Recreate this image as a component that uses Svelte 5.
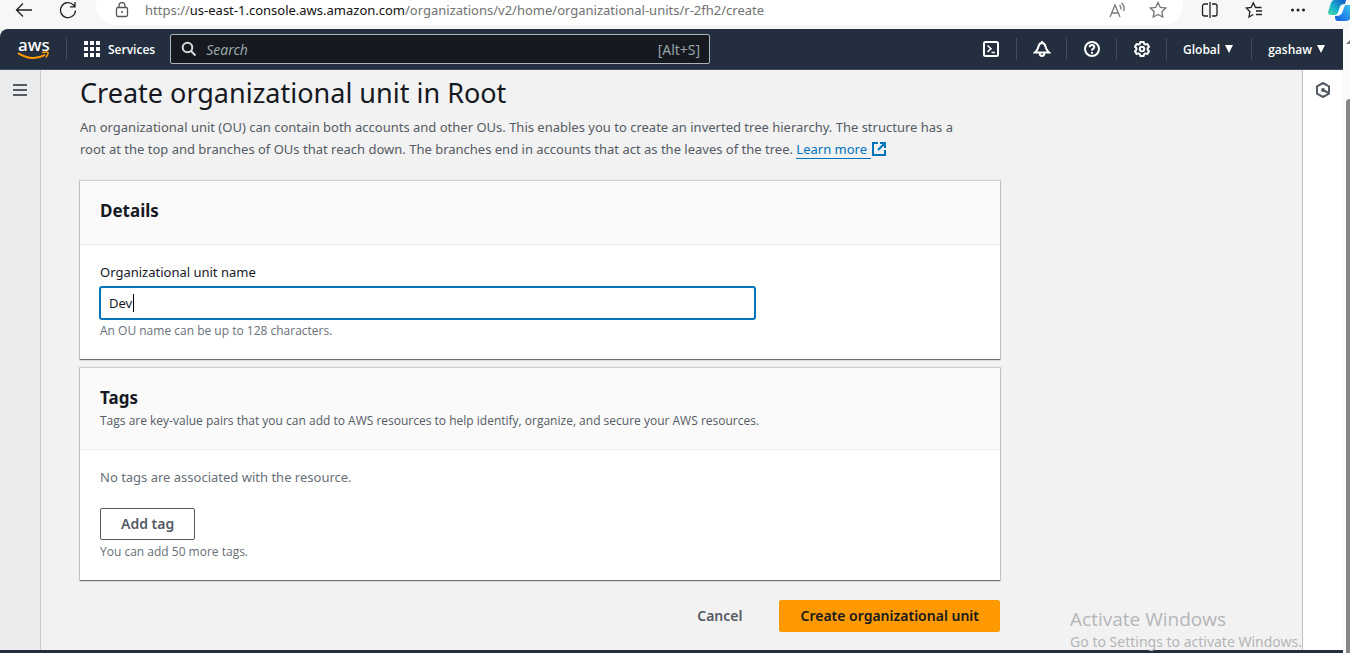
<script>
  let name = $state('Dev');
  let query = $state('');
</script>

<div class="window">
  <header class="browser">
    <button class="plain back" aria-label="Back">
      <svg width="18" height="16" viewBox="0 0 18 16"><path d="M17 8H1.5M8 1.500L1.500 8L8 14.500" /></svg>
    </button>
    <button class="plain reload" aria-label="Refresh">
      <svg width="18" height="18" viewBox="0 0 18 18"><path d="M16.500 9.500A7.500 7.500 0 1 1 14.500 4L16 5.500M16 1V5.800H11" /></svg>
    </button>
    <div class="address">
      <svg class="lock" width="14" height="16" viewBox="0 0 14 16"><rect x="1.500" y="5.500" width="11" height="9" rx="1.500" /><path d="M4 5.500V3.500a3 3 0 0 1 6 0V5.500" /><circle cx="7" cy="10" r="1" fill="#555" stroke="none" /></svg>
      <span class="url">https://<b>us-east-1.console.aws.amazon.com</b>/organizations/v2/home/organizational-units/r-2fh2/create</span>
      <button class="plain" aria-label="Read aloud">
        <svg class="grey" width="18" height="16" viewBox="0 0 18 16"><path d="M1 15L6 3L11 15M2.800 11H9.200M10.500 3Q12.500 5 11.800 7.500M12.500 1Q16.500 4.500 14.500 9" /></svg>
      </button>
      <button class="plain star" aria-label="Add to favorites">
        <svg class="grey" width="18" height="18" viewBox="0 0 18 18"><path d="M9 1.500L11.300 6.300L16.700 7L12.800 10.700L13.800 16L9 13.400L4.200 16L5.200 10.700L1.300 7L6.700 6.300Z" /></svg>
      </button>
    </div>
    <div class="tools">
      <button class="plain" aria-label="Split screen">
        <svg width="18" height="18" viewBox="0 0 18 18"><path d="M7 3H3.500A2 2 0 0 0 1.500 5V13A2 2 0 0 0 3.500 15H7M11 3H14A2 2 0 0 1 16 5V13A2 2 0 0 1 14 15H11M9 1V17" /></svg>
      </button>
      <button class="plain" aria-label="Favorites">
        <svg width="18" height="18" viewBox="0 0 18 18"><path d="M16.500 6.500H10.500L8.300 1.800L6.200 6.300L1.300 7L4.900 10.700L4 16L8.300 13.500M11 10H17M11 13.500H17" /></svg>
      </button>
      <button class="plain" aria-label="Settings and more">
        <svg width="18" height="18" viewBox="0 0 18 18"><g fill="#222" stroke="none"><circle cx="3.500" cy="9" r="1.500" /><circle cx="9" cy="9" r="1.500" /><circle cx="14.500" cy="9" r="1.500" /></g></svg>
      </button>
      <button class="plain copilot" aria-label="Copilot">
        <svg width="22" height="22" viewBox="0 0 22 22">
          <defs>
            <linearGradient id="cpa" x1="0" y1="1" x2="1" y2="0"><stop offset="0" stop-color="#4fdc9a" /><stop offset=".4" stop-color="#17b3cf" /><stop offset="1" stop-color="#1457c9" /></linearGradient>
            <linearGradient id="cpb" x1="0" y1="1" x2="1" y2="0"><stop offset="0" stop-color="#1660d8" /><stop offset=".5" stop-color="#2489ed" /><stop offset="1" stop-color="#38c8e8" /></linearGradient>
          </defs>
          <path d="M6 0H18L17 4Q13 4 12 7L10 13Q9 15 7 15H3Q0 15 0 12L3 3Q4 0 6 0Z" fill="url(#cpa)" stroke="none" />
          <path d="M17 5H22V19Q21 21 18 21H10Q7 21 7 17V16Q11 16 12 13Z" fill="url(#cpb)" stroke="none" />
          <path d="M12 7Q13 4 17 5L14 13Q12 17 7 15Q9.500 15 10 13Z" fill="#fff" stroke="none" />
        </svg>
      </button>
    </div>
  </header>

  <div class="viewport">
    <div class="page">
      <nav class="topnav">
        <a class="logo" href="#home" aria-label="AWS home">
          <span>aws</span>
          <svg width="34" height="10" viewBox="0 0 34 10"><path d="M1 2Q15 11 28 3.800" /><path d="M25 1.500Q30.500 .5 31 1.500Q31.500 3 29 6.500" stroke-width="1.500" /></svg>
        </a>
        <button class="services">
          <svg width="16" height="16" viewBox="0 0 16 16"><path d="M0 0h4v4H0zM6 0h4v4H6zM12 0h4v4h-4zM0 6h4v4H0zM6 6h4v4H6zM12 6h4v4h-4zM0 12h4v4H0zM6 12h4v4H6zM12 12h4v4h-4z" fill="#fff" stroke="none" /></svg>
          Services
        </button>
        <label class="search">
          <svg width="16" height="16" viewBox="0 0 16 16"><circle cx="6.500" cy="6.500" r="4.800" /><path d="M10 10L14.500 14.500" /></svg>
          <input type="search" placeholder="Search" aria-label="Search" bind:value={query} />
          <kbd>[Alt+S]</kbd>
        </label>
        <div class="actions">
          <button class="icon" aria-label="CloudShell">
            <svg width="16" height="16" viewBox="0 0 16 16"><rect x="1" y="1" width="14" height="14" rx="1.500" /><path d="M4.500 4.500L8 7.700L4.500 11M8.500 11.500H12" stroke-width="1.600" /></svg>
          </button>
          <button class="icon" aria-label="Notifications">
            <svg width="18" height="16" viewBox="0 0 18 16"><path d="M9 0V2M2 11.500H16C13.500 9.500 13 8 12.500 5.500C12 3 11 2 9 2S6 3 5.500 5.500C5 8 4.500 9.500 2 11.500Z" /><path d="M6.500 12Q7 15 9 15T11.500 12" /></svg>
          </button>
          <button class="icon" aria-label="Help">
            <svg width="16" height="16" viewBox="0 0 16 16"><circle cx="8" cy="8" r="7" /><path d="M5.700 6.200Q5.700 4 8 4T10.300 6Q10.300 7.200 9 7.900Q8 8.500 8 9.700M8 11V12.800" /></svg>
          </button>
          <button class="icon" aria-label="Settings">
            <svg width="16" height="16" viewBox="0 0 16 16"><path d="M6.300 1H9.700L10.200 2.900L11.500 3.600L13.400 3L15 5.800L13.600 7.200V8.800L15 10.200L13.400 13L11.500 12.400L10.200 13.100L9.700 15H6.300L5.800 13.100L4.500 12.400L2.600 13L1 10.200L2.400 8.800V7.200L1 5.800L2.600 3L4.500 3.600L5.800 2.900Z" stroke-linejoin="round" /><circle cx="8" cy="8" r="2.200" /></svg>
          </button>
          <button class="menu">Global <svg width="8" height="8" viewBox="0 0 8 8"><path d="M0 0H8L4 8Z" fill="#fff" stroke="none" /></svg></button>
          <button class="menu">gashaw <svg width="8" height="8" viewBox="0 0 8 8"><path d="M0 0H8L4 8Z" fill="#fff" stroke="none" /></svg></button>
        </div>
      </nav>

      <div class="body">
        <aside class="left">
          <button class="plain" aria-label="Open navigation">
            <svg width="14" height="12" viewBox="0 0 14 12"><path d="M0 1H14M0 6H14M0 11H14" stroke="#545b64" stroke-width="2" /></svg>
          </button>
        </aside>

        <main>
          <form class="column" onsubmit={(e) => e.preventDefault()}>
            <div class="intro">
              <h1>Create organizational unit in Root</h1>
              <p>
                An organizational unit (OU) can contain both accounts and other OUs. This enables you to create an inverted tree hierarchy. The structure has a
                root at the top and branches of OUs that reach down. The branches end in accounts that act as the leaves of the tree.
                <a href="#learn"><span>Learn more</span><svg width="16" height="16" viewBox="0 0 16 16"><path d="M7 2H2V14H14V9M9 2H14V7M14 2L7 9" /></svg></a>
              </p>
            </div>

            <section class="card">
              <div class="head"><h2>Details</h2></div>
              <div class="content">
                <label class="name" for="ou-name">Organizational unit name</label>
                <div class="field">
                  <input id="ou-name" type="text" bind:value={name} />
                  <i class="caret"></i>
                </div>
                <p class="hint">An OU name can be up to 128 characters.</p>
              </div>
            </section>

            <section class="card">
              <div class="head tags">
                <h2>Tags</h2>
                <p>Tags are key-value pairs that you can add to AWS resources to help identify, organize, and secure your AWS resources.</p>
              </div>
              <div class="content">
                <p class="empty">No tags are associated with the resource.</p>
                <button type="button" class="btn outline">Add tag</button>
                <p class="hint">You can add 50 more tags.</p>
              </div>
            </section>

            <div class="submit">
              <button type="button" class="btn link">Cancel</button>
              <button type="submit" class="btn primary">Create organizational unit</button>
            </div>
          </form>
        </main>

        <aside class="right">
          <button class="plain" aria-label="Open tools">
            <svg width="16" height="16" viewBox="0 0 16 16"><path d="M8 1L14 4.300V11.700L8 15L2 11.700V4.300Z" stroke="#545b64" stroke-width="2" stroke-linejoin="round" /><circle cx="8" cy="8" r="2" fill="#545b64" stroke="none" /><path d="M8 8L13.500 11" stroke="#545b64" stroke-width="2" /></svg>
          </button>
        </aside>
      </div>
      <footer></footer>
    </div>
    <div class="scroll"><span class="up"></span><span class="thumb"></span></div>
  </div>

  <div class="notice">
    <strong>Activate Windows</strong>
    <span>Go to Settings to activate Windows.</span>
  </div>
</div>

<style>
  :global(body) { margin: 0; background: #f2f2f2; }
  .window, .window :is(button, input) { font-family: "Noto Sans", "Open Sans", sans-serif; }
  .window { position: relative; min-height: 100vh; display: flex; flex-direction: column; color: #16191f; font-size: 13px; }
  * { box-sizing: border-box; }
  h1, h2, p { margin: 0; }
  svg { fill: none; stroke: #222; stroke-width: 1.3; flex: none; display: block; }
  svg.grey { stroke: #777; }
  button { cursor: pointer; }
  .plain { border: 0; padding: 0; background: none; display: flex; align-items: center; }

  .browser { height: 29px; display: flex; align-items: flex-start; background: #f7f7f7; overflow: hidden; }
  .browser .plain { height: 20px; }
  .back { margin-left: 15px; }
  .reload { margin-left: 26px; }
  .address { flex: 1; height: 25px; margin-left: 19px; padding: 0 16px 0 19px; display: flex; align-items: flex-start; background: #fff; border-radius: 0 0 20px 20px; }
  .lock { margin-top: 2px; stroke: #555; }
  .url { flex: 1; min-width: 0; margin-left: 16px; overflow: hidden; white-space: nowrap; font-size: 13px; line-height: 20px; color: #717171; }
  .url b { font-weight: 400; color: #111; }
  .star { margin-left: 22px; }
  .tools { display: flex; gap: 26px; margin-left: 18px; }
  .browser .copilot { margin-left: -5px; align-items: flex-start; }

  .viewport { flex: 1; display: flex; }
  .page { flex: 1; min-width: 0; display: flex; flex-direction: column; }
  .topnav { height: 41px; display: flex; align-items: center; background: #232f3e; border-top-left-radius: 8px; border-bottom: 1px solid #414d5c; color: #fff; }
  .topnav svg { stroke: #fff; stroke-width: 2; }
  .topnav button { border: 0; background: none; color: #fff; font-family: "Open Sans", "Noto Sans", sans-serif; font-size: 12px; font-weight: 600; display: flex; align-items: center; }
  .logo { width: 66px; padding: 0 0 2px 17px; color: #fff; text-decoration: none; font-size: 17px; font-weight: 500; line-height: 17px; }
  .logo span { display: block; padding-left: 1px; }
  .topnav .logo svg { stroke: #f90; margin-top: -2px; }
  .topnav .services { height: 22px; padding: 0 15px 0 17px; gap: 8px; border-left: 1px solid #414d5c; }
  .search { width: 540px; height: 30px; padding: 0 9px 0 10px; display: flex; align-items: center; gap: 9px; background: #16191f; border: 1px solid #aab7b8; border-radius: 2px; }
  .search svg { stroke: #d5dbdb; }
  .search input { flex: 1; min-width: 0; border: 0; padding: 0; outline: 0; background: none; color: #fff; font-size: 14px; }
  .search input::placeholder { color: #95a5a6; font-style: italic; opacity: 1; }
  kbd { font-family: inherit; font-size: 14px; color: #95a5a6; }
  .actions { margin-left: auto; display: flex; }
  .topnav .actions button { height: 22px; border-left: 1px solid #414d5c; }
  .topnav .actions button:first-child { border-left: 0; }
  .topnav .icon { width: 50px; padding: 0; justify-content: center; }
  .topnav .menu { padding: 0 18px 0 16px; gap: 5px; }

  .body { flex: 1; display: flex; }
  .left { width: 41px; background: #eaebed; border-right: 1px solid #c8cacc; padding: 14px 0 0 13px; }
  .right { width: 41px; background: #fff; border-left: 1px solid #c0c2c4; padding: 12px 0 0 12px; }
  main { flex: 1; min-width: 0; padding: 7px 39px 18px; background: #f2f2f2; }
  .column { max-width: 920px; display: flex; flex-direction: column; }
  .intro { margin-bottom: 21px; }
  h1 { font-size: 27px; line-height: 32px; font-weight: 400; }
  .intro p { margin-top: 7px; padding-right: 32px; line-height: 22px; color: #545b64; }
  .intro a { color: #0073bb; text-decoration: none; white-space: nowrap; }
  .intro a span { padding-right: 4px; border-bottom: 1px solid #0073bb; }
  .intro a svg { display: inline-block; vertical-align: -3px; stroke: #0073bb; stroke-width: 2; }

  .card { background: #fff; box-shadow: 0 1px 1px 0 #0007, 0 0 1px 1px #0002; }
  .card + .card { margin-top: 9px; }
  .head { padding: 17px 20px 21px; background: #fafafa; border-bottom: 1px solid #eaeded; }
  h2 { font-size: 17px; line-height: 25px; font-weight: 700; }
  .head.tags { padding-bottom: 18px; }
  .head p { margin-top: 1px; font-family: "Open Sans", "Noto Sans", sans-serif; font-size: 12px; line-height: 20px; color: #545b64; }
  .content { padding: 17px 20px 20px; }
  .name { display: block; line-height: 20px; margin-bottom: 5px; }
  .field { position: relative; width: calc(75% - 5px); }
  .field input { width: 100%; height: 32px; padding: 0 8px; border: 1px solid #0073bb; box-shadow: 0 0 0 1px #0073bb; border-radius: 2px; outline: 0; font-size: 13px; color: #16191f; display: block; }
  .caret { position: absolute; left: 33px; top: 7px; width: 1px; height: 18px; background: #000; }
  .hint { font-family: "Open Sans", "Noto Sans", sans-serif; font-size: 12px; line-height: 16px; margin-top: 4px; color: #687078; }
  .empty { line-height: 20px; color: #687078; margin-bottom: 21px; }
  .btn { height: 32px; padding: 0 20px 2px; border: 1px solid transparent; border-radius: 2px; background: none; font-size: 14px; font-weight: 600; }
  .outline { border-color: #545b64; background: #fff; color: #545b64; }
  .submit { display: flex; justify-content: flex-end; gap: 16px; margin-top: 20px; }
  .link { color: #545b64; }
  .primary { background: #f90; border-color: #f90; color: #16191f; }
  footer { height: 3px; background: #232f3e; }

  .scroll { width: 7px; background: #fbfbfb; display: flex; flex-direction: column; padding-left: 3px; overflow: hidden; }
  .up { border: 5px solid transparent; border-bottom-color: #777; border-top: 0; width: 0; margin-top: 10px; }
  .thumb { flex: 1; margin-top: 55px; width: 8px; background: #858585; border-radius: 4px 0 0 0; }
  .notice { position: absolute; right: 48px; bottom: 1px; display: flex; flex-direction: column; color: #b4b6b8; pointer-events: none; white-space: nowrap; }
  .notice strong { font-family: "Open Sans", "Noto Sans", sans-serif; font-size: 19px; line-height: 26px; font-weight: 400; }
  .notice span { font-size: 14px; line-height: 20px; }
</style>
